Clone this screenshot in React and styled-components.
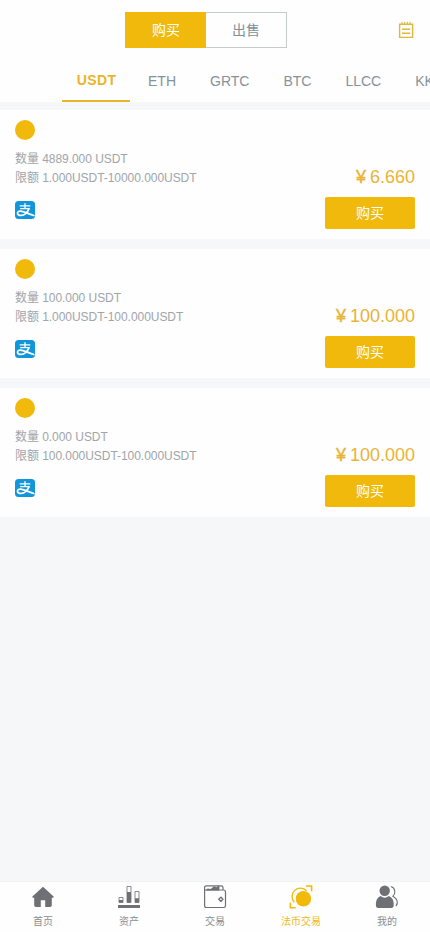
import React, {useState} from 'react'
import styled, {createGlobalStyle} from 'styled-components'

const GlobalStyle = createGlobalStyle`
	* {
		box-sizing: border-box;
	}
	body {
		margin: 0;
		background: #f6f7f9;
		font-family: "Liberation Sans", "Noto Sans CJK SC", sans-serif;
		overflow: hidden;
	}
	button {
		font-family: inherit;
		border: 0;
		padding: 0;
		background: none;
		cursor: pointer;
	}
`

const Page = styled.div`
	display: flex;
	flex-direction: column;
	width: 100%;
	height: 100vh;
	overflow: hidden;
`

const Header = styled.header`
	display: grid;
	grid-template-columns: 125px 162px 1fr;
	align-items: center;
	height: 60px;
	padding-right: 16px;
	background: #fefefe;
`

const Switch = styled.div`
	grid-column: 2;
	display: flex;
	height: 36px;
	border: 1px solid #c6cbcc;
`

const SwitchItem = styled.button`
	flex: 1;
	margin: ${({$active}) => $active ? '-1px' : '0'};
	padding: 0 0 2px 1px;
	font-size: 14px;
	color: ${({$active}) => $active ? '#fff' : '#7f909b'};
	background: ${({$active}) => $active ? '#f0b90b' : 'transparent'};
`

const OrdersButton = styled.button`
	justify-self: end;
	display: flex;
`

const Tabs = styled.nav`
	display: flex;
	flex: none;
	height: 42px;
	padding-left: 62px;
	background: #fefefe;
	overflow: hidden;
`

const Tab = styled.button`
	flex: none;
	height: 42px;
	padding: 0 17px;
	font-size: 14px;
	color: #84929a;
	${({$active}) => $active && `
		width: 68px;
		margin-right: 1px;
		padding: 0 0 0 1px;
		font-weight: bold;
		letter-spacing: 0.4px;
		color: #eab52a;
		border-bottom: 2px solid #e9b62c;
	`}
`

const List = styled.main`
	flex: 1;
	display: flex;
	flex-direction: column;
	gap: 10px;
	padding-top: 8px;
`

const Card = styled.section`
	height: 129px;
	padding: 10px 15px 0;
	background: #fefefe;
`

const Avatar = styled.div`
	width: 20px;
	height: 20px;
	margin-bottom: 10px;
	border-radius: 50%;
	background: #f0b90b;
`

const Row = styled.div`
	display: flex;
	justify-content: space-between;
	align-items: flex-start;
`

const Info = styled.p`
	margin: 0;
	font-size: 12px;
	line-height: 19px;
	letter-spacing: -0.05px;
	color: #a0a5aa;
`

const Price = styled.div`
	display: flex;
	gap: 4px;
	font-size: 18px;
	line-height: 16px;
	color: #e8b436;
`

const Yen = styled.span`
	width: 10px;
	-webkit-text-stroke: 0.4px currentColor;
`

const BuyButton = styled.button`
	width: 90px;
	height: 32px;
	margin-top: 9px;
	padding-bottom: 2px;
	font-size: 14px;
	color: #fff;
	background: #f0b90b;
	border-radius: 2px;
`

const PayIcon = styled.svg`
	display: block;
	margin-top: 13px;
`

const BottomNav = styled.nav`
	display: flex;
	flex: none;
	height: 51px;
	background: #fefefe;
	border-top: 1px solid #f0f1f3;
`

const NavItem = styled.button`
	flex: 1;
	display: flex;
	flex-direction: column;
	align-items: center;
	padding-top: 3px;
	font-size: 10px;
	line-height: 15px;
	color: ${({$active}) => $active ? '#eeb81c' : '#8b8c8f'};
	svg{
		display: block;
		margin-bottom: 5px;
		color: ${({$active}) => $active ? '#f0b90b' : '#6f7075'};
	}
`

const OrdersIcon = () => <svg width="16" height="18" viewBox="0 0 16 18" fill="none" stroke="#dfb93f" strokeWidth="1.4">
	<path d="M1.6 3.2h13v13.2h-13z" />
	<path d="M4 .8v3M6.7 .8v3M9.4 .8v3M12.1 .8v3" strokeWidth="1.1" />
	<path d="M4 8.3h8.2M4 12.3h8.2" />
</svg>

const Alipay = () => <PayIcon width="20" height="18" viewBox="0 0 20 18">
	<rect width="20" height="18" rx="3.5" fill="#1296db" />
	<g fill="none" stroke="#fff" strokeLinecap="round">
		<path d="M5.2 4.9h9.6M10 2.6v5M5.7 7.7h8.3" strokeWidth="1.3" />
		<path d="M14 7.8c-1.2 3.2-4.4 6.6-7.9 6.6-2.4 0-3.7-1.1-3.6-2.4.1-1.4 1.5-2.1 3.3-1.9 4 .4 7.8 2.9 13 4.4" strokeWidth="1.8" />
	</g>
</PayIcon>

const HomeIcon = () => <svg width="24" height="24" viewBox="0 0 24 24" fill="currentColor">
	<path d="M12 1.7 1.4 11.5q-.5.9.5 1.2h1.3v7.6q0 1.7 1.7 1.7h4.9v-6.8h4.4V22h4.9q1.7 0 1.7-1.7v-7.6h1.3q1-.3.5-1.2Z" />
</svg>

const AssetsIcon = () => <svg width="24" height="24" viewBox="0 0 24 24">
	<path fill="currentColor" d="M1 20h22v3H1zM2 15h4v2.5H2zM10 7h4v10.5h-4zM18 13.3h4v4.2h-4z" />
	<path fill="none" stroke="currentColor" strokeWidth=".8" d="M2 12.5h4v5H2zM10 1.5h4v16h-4zM18 6.5h4v11h-4z" />
</svg>

const WalletIcon = () => <svg width="24" height="24" viewBox="0 0 24 24" fill="none" stroke="currentColor" strokeWidth="1.2">
	<path d="M1.6 5h18.9q2 0 2 2v13.8q0 1.7-1.7 1.7H3.3q-1.7 0-1.7-1.7V2.5q0-1.7 1.7-1.7h15q1.7 0 1.7 1.7V5" />
	<path d="m2.6 5.4 2-2 3.1.6L11 1.3l2.4 1L15 1h1.4v4.4z" fill="currentColor" stroke="none" />
	<path d="m17.9 12-2.1 2.2 2.1 2.3M17.9 12l2 2.2-2 2.3" strokeWidth="1.3" />
</svg>

const FiatIcon = () => <svg width="24" height="24" viewBox="0 0 24 24" fill="none" stroke="currentColor">
	<path d="M17 1h5.6v5.2M1.4 17.8v5h5.2" strokeWidth="1.6" />
	<path d="M5.3 17.3a8.3 8.3 0 1 1 12.3-11.5" strokeWidth="1.3" />
	<circle cx="14.4" cy="13.8" r="7.7" fill="currentColor" stroke="none" />
</svg>

const UserIcon = () => <svg width="24" height="24" viewBox="0 0 24 24" fill="currentColor">
	<circle cx="9.7" cy="5.8" r="5.2" />
	<path d="M5.6 10.9q4.1 3.5 8.2 0 4.9 2.3 4.9 7.7v1.7q0 2.7-2.5 2.7H3.3Q.9 23 .9 20.3v-1.7q0-5.4 4.7-7.7Z" />
	<path d="M16 1.6c4.6 1.5 4.9 6.9 1.9 9.6 4.5 2.4 5.8 6.6 3 9.9" fill="none" stroke="currentColor" strokeWidth="1.1" />
</svg>

const coins = ['USDT', 'ETH', 'GRTC', 'BTC', 'LLCC', 'KK']

const offers = [
	{id: 1, amount: '4889.000', min: '1.000', max: '10000.000', price: '6.660'},
	{id: 2, amount: '100.000', min: '1.000', max: '100.000', price: '100.000'},
	{id: 3, amount: '0.000', min: '100.000', max: '100.000', price: '100.000'},
]

const navItems = [
	{name: '首页', Icon: HomeIcon},
	{name: '资产', Icon: AssetsIcon},
	{name: '交易', Icon: WalletIcon},
	{name: '法币交易', Icon: FiatIcon},
	{name: '我的', Icon: UserIcon},
]

const Offer = ({offer, coin, action})=>{
	return <Card>
		<Avatar />
		<Info>数量 {offer.amount} {coin}</Info>
		<Row>
			<Info>限额 {offer.min}{coin}-{offer.max}{coin}</Info>
			<Price><Yen>¥</Yen>{offer.price}</Price>
		</Row>
		<Row>
			<Alipay />
			<BuyButton>{action}</BuyButton>
		</Row>
	</Card>
}

const App = ()=>{
	const [side, setSide] = useState('购买')
	const [coin, setCoin] = useState('USDT')
	const [page, setPage] = useState('法币交易')

	return <>
		<GlobalStyle />
		<Page>
			<Header>
				<Switch>
					{['购买', '出售'].map(item => <SwitchItem key={item} $active={item === side}
					onClick={()=>{setSide(item)}}>{item}</SwitchItem>)}
				</Switch>
				<OrdersButton><OrdersIcon /></OrdersButton>
			</Header>
			<Tabs>
				{coins.map(item => <Tab key={item} $active={item === coin}
				onClick={()=>{setCoin(item)}}>{item}</Tab>)}
			</Tabs>
			<List>
				{offers.map(offer => <Offer key={offer.id} offer={offer} coin={coin} action={side} />)}
			</List>
			<BottomNav>
				{navItems.map(({name, Icon}) => <NavItem key={name} $active={name === page}
				onClick={()=>{setPage(name)}}><Icon />{name}</NavItem>)}
			</BottomNav>
		</Page>
	</>
}

export default App
